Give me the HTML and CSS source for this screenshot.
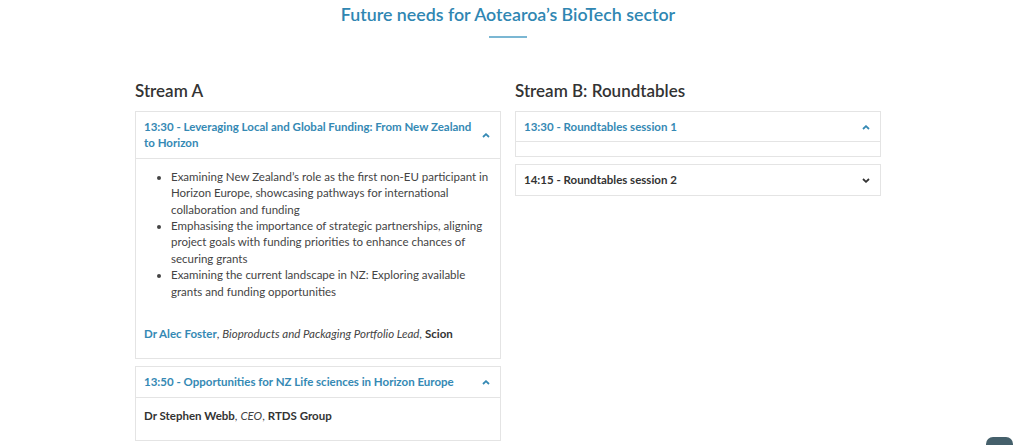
FILE: index.html
```html
<!DOCTYPE html>
<html>
<head>
<meta charset="utf-8">
<title>Future needs for Aotearoa's BioTech sector</title>
<link rel="stylesheet" href="styles.css">
</head>
<body>
  <div class="page">
    <h2 class="title">Future needs for Aotearoa’s BioTech sector</h2>
    <div class="rule"></div>

    <div class="streams">
      <div class="stream">
        <h3>Stream A</h3>

        <div class="item open">
          <div class="head">
            <span>13:30 - Leveraging Local and Global Funding: From New Zealand to Horizon</span>
            <svg class="chev" width="8" height="5" viewBox="0 0 8 5"><path d="M1 4L4 1.2L7 4" fill="none" stroke="currentColor" stroke-width="1.8"/></svg>
          </div>
          <div class="body">
            <ul>
              <li>Examining New Zealand’s role as the first non-EU participant in Horizon Europe, showcasing pathways for international collaboration and funding</li>
              <li>Emphasising the importance of strategic partnerships, aligning project goals with funding priorities to enhance chances of securing grants</li>
              <li>Examining the current landscape in NZ: Exploring available grants and funding opportunities</li>
            </ul>
            <p><b class="link">Dr Alec Foster</b>, <i>Bioproducts and Packaging Portfolio Lead</i>, <b>Scion</b></p>
          </div>
        </div>

        <div class="item open">
          <div class="head">
            <span>13:50 - Opportunities for NZ Life sciences in Horizon Europe</span>
            <svg class="chev" width="8" height="5" viewBox="0 0 8 5"><path d="M1 4L4 1.2L7 4" fill="none" stroke="currentColor" stroke-width="1.8"/></svg>
          </div>
          <div class="body">
            <p><b>Dr Stephen Webb</b>, <i>CEO</i>, <b>RTDS Group</b></p>
          </div>
        </div>
      </div>

      <div class="stream">
        <h3>Stream B: Roundtables</h3>

        <div class="item open">
          <div class="head">
            <span>13:30 - Roundtables session 1</span>
            <svg class="chev" width="8" height="5" viewBox="0 0 8 5"><path d="M1 4L4 1.2L7 4" fill="none" stroke="currentColor" stroke-width="1.8"/></svg>
          </div>
          <div class="body empty"></div>
        </div>

        <div class="item">
          <div class="head">
            <span>14:15 - Roundtables session 2</span>
            <svg class="chev" width="8" height="5" viewBox="0 0 8 5"><path d="M1 1L4 3.8L7 1" fill="none" stroke="currentColor" stroke-width="1.8"/></svg>
          </div>
        </div>
      </div>
    </div>
  </div>

  <div class="to-top"></div>
</body>
</html>
```

FILE: styles.css
```css
body {
    margin: 0;
    background: #fff;
    color: #444;
    font-family: Lato, "Noto Sans", sans-serif;
    font-size: 11.5px;
    overflow: hidden;
}
.page {
    width: 746px;
    margin-left: 135px;
}
.title {
    margin: 0;
    padding-top: 3px;
    text-align: center;
    font-size: 17.8px;
    line-height: 22px;
    font-weight: 600;
    color: #2f86b2;
}
.rule {
    width: 38px;
    height: 2px;
    margin: 11px auto 0;
    background: #7bb7d3;
}
.streams {
    display: flex;
    gap: 14px;
    margin-top: 42px;
}
.stream {
    flex: 1;
}
.stream h3 {
    margin: 0 0 9px;
    font-size: 17px;
    line-height: 22px;
    font-weight: 600;
    color: #333;
}
.item {
    border: 1px solid #e4e4e4;
    margin-bottom: 7px;
}
.head {
    display: flex;
    align-items: center;
    justify-content: space-between;
    padding: 7px 8px 6px;
    line-height: 16.4px;
    font-weight: 700;
    color: #333;
}
.head span {
    max-width: 330px;
}
.open .head {
    color: #3589b4;
    border-bottom: 1px solid #e4e4e4;
}
.chev {
    margin-right: 2px;
    flex: none;
}
.body {
    padding: 10px 8px 1px;
    line-height: 16.4px;
}
.body ul {
    margin: 0 0 26px;
    padding-left: 27px;
}
.body p {
    margin: 0 0 15px;
}
.body b {
    color: #333;
}
.body b.link {
    color: #3589b4;
}
.body.empty {
    padding: 0;
    height: 14px;
}
.to-top {
    position: fixed;
    right: 11px;
    bottom: -20px;
    width: 27px;
    height: 28px;
    border-radius: 7px;
    background: #45606b;
}
```
